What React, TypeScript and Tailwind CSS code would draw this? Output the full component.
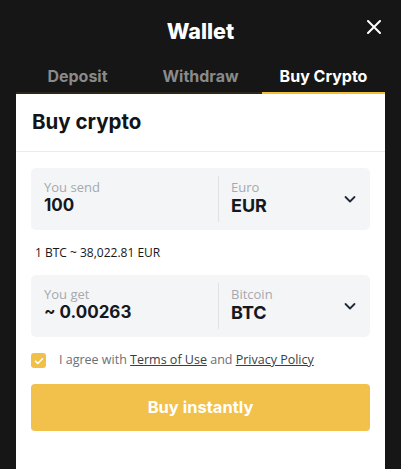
import React from "react";

const body = { fontFamily: '"Open Sans", "Noto Sans", sans-serif' };
const head = { fontFamily: 'Inter, "Noto Sans", sans-serif' };

function Chevron() {
  return (
    <svg width="14" height="14" viewBox="0 0 14 14" fill="none">
      <path d="M2.5 5l4.5 4.5L11.5 5" stroke="#1f2937" strokeWidth="1.8" strokeLinecap="round" strokeLinejoin="round" />
    </svg>
  );
}

function Field({ label, value, curLabel, cur }: { label: string; value: string; curLabel: string; cur: string }) {
  return (
    <div className="flex h-[62px] items-center rounded-[5px] bg-[#f4f5f7]">
      <div className="flex h-full w-[187px] flex-col justify-center pb-[4px] pl-[13px]">
        <div className="text-[13px] leading-[16px] text-[#a5a9ae]" style={body}>{label}</div>
        <div className="text-[17px] font-bold leading-[20px] text-[#15181d]" style={head}>{value}</div>
      </div>
      <div className="h-[46px] w-px bg-[#dfe2e6]" />
      <div className="flex h-full flex-1 items-center justify-between pl-[12px] pr-[13px]">
        <div className="flex flex-col justify-center pb-[2px]">
          <div className="text-[13px] leading-[16px] text-[#a5a9ae]" style={body}>{curLabel}</div>
          <div className="text-[18px] font-bold leading-[22px] text-[#15181d]" style={head}>{cur}</div>
        </div>
        <Chevron />
      </div>
    </div>
  );
}

export default function App() {
  return (
    <div className="flex h-[469px] w-[401px] flex-col bg-[#161616]">
      <div className="relative flex h-[62px] items-center justify-center">
        <div className="text-[21.5px] font-extrabold text-white" style={head}>Wallet</div>
        <svg className="absolute left-[367px] top-[20px]" width="14" height="14" viewBox="0 0 14 14">
          <path d="M1 1l12 12M13 1L1 13" stroke="white" strokeWidth="2" strokeLinecap="round" />
        </svg>
      </div>
      <div className="mx-[16px] flex h-[32px]">
        <div className="flex flex-1 items-center justify-center border-b-2 border-[#2e2617] pb-[2px] text-[16px] font-bold text-[#8a8a8a]" style={head}>Deposit</div>
        <div className="flex flex-1 items-center justify-center border-b-2 border-[#2e2617] pb-[2px] text-[16px] font-bold text-[#8a8a8a]" style={head}>Withdraw</div>
        <div className="flex w-[123px] items-center justify-center border-b-2 border-[#f2c037] pb-[2px] text-[16px] font-bold text-white" style={head}>Buy Crypto</div>
      </div>
      <div className="mx-[16px] flex-1 bg-white">
        <div className="flex h-[58px] items-center border-b border-[#e5edf4] pl-[16px]">
          <div className="text-[20.5px] font-bold text-[#111418]" style={head}>Buy crypto</div>
        </div>
        <div className="px-[15px] pt-[16px]">
          <Field label="You send" value="100" curLabel="Euro" cur="EUR" />
          <div className="flex h-[45px] items-center pl-[4px] text-[12px] text-[#15181d]" style={body}>1 BTC ~ 38,022.81 EUR</div>
          <Field label="You get" value="~ 0.00263" curLabel="Bitcoin" cur="BTC" />
          <div className="flex h-[47px] items-center">
            <div className="flex h-[15px] w-[15px] items-center justify-center rounded-[3px] bg-[#f0c048]">
              <svg width="10" height="10" viewBox="0 0 10 10" fill="none">
                <path d="M1.5 5.2l2.3 2.3L8.5 2.8" stroke="white" strokeWidth="1.6" strokeLinecap="round" strokeLinejoin="round" />
              </svg>
            </div>
            <div className="ml-[13px] text-[12.5px] text-[#6b6f75]" style={body}>
              I agree with <span className="underline text-[#3a3e44]">Terms of Use</span> and <span className="underline text-[#3a3e44]">Privacy Policy</span>
            </div>
          </div>
          <button className="flex h-[47px] w-full items-center justify-center rounded-[4px] bg-[#f2c14b] text-[16.5px] font-bold text-white" style={head}>Buy instantly</button>
        </div>
      </div>
    </div>
  );
}
